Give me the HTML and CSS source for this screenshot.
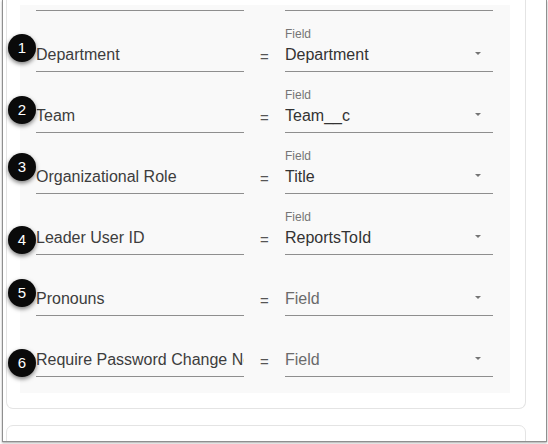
FILE: index.html
```html
<!DOCTYPE html>
<html>
<head>
<meta charset="utf-8">
<link rel="stylesheet" href="styles.css">
</head>
<body>
<div class="window">
  <div class="card card-main">
    <div class="panel">
      <div class="row row-partial">
        <div class="input"></div>
        <div class="eq"></div>
        <div class="select"></div>
      </div>

      <div class="row">
        <span class="badge b1">1</span>
        <div class="input"><span class="val">Department</span></div>
        <div class="eq">=</div>
        <div class="select"><span class="lbl">Field</span><span class="val">Department</span><span class="caret"></span></div>
      </div>

      <div class="row">
        <span class="badge b2">2</span>
        <div class="input"><span class="val">Team</span></div>
        <div class="eq">=</div>
        <div class="select"><span class="lbl">Field</span><span class="val">Team__c</span><span class="caret"></span></div>
      </div>

      <div class="row">
        <span class="badge b3">3</span>
        <div class="input"><span class="val">Organizational Role</span></div>
        <div class="eq">=</div>
        <div class="select"><span class="lbl">Field</span><span class="val">Title</span><span class="caret"></span></div>
      </div>

      <div class="row">
        <span class="badge b4">4</span>
        <div class="input"><span class="val">Leader User ID</span></div>
        <div class="eq">=</div>
        <div class="select"><span class="lbl">Field</span><span class="val">ReportsToId</span><span class="caret"></span></div>
      </div>

      <div class="row">
        <span class="badge b5">5</span>
        <div class="input"><span class="val">Pronouns</span></div>
        <div class="eq">=</div>
        <div class="select"><span class="val placeholder">Field</span><span class="caret"></span></div>
      </div>

      <div class="row">
        <span class="badge b6">6</span>
        <div class="input"><span class="val">Require Password Change Next Login</span></div>
        <div class="eq">=</div>
        <div class="select"><span class="val placeholder">Field</span><span class="caret"></span></div>
      </div>
    </div>
  </div>
  <div class="card card-next"></div>
</div>
</body>
</html>
```

FILE: styles.css
```css
* { box-sizing: border-box; }
html, body { margin: 0; padding: 0; background: #ffffff; }
body {
  width: 548px;
  height: 444px;
  overflow: hidden;
  font-family: "Liberation Sans", Arial, "Helvetica Neue", sans-serif;
}
.window {
  margin-left: 2px;
  width: 545px;
  height: 442px;
  border: 1px solid #8f8f8f;
  border-top: none;
  box-shadow: 0 1px 2px rgba(0,0,0,0.35);
  background: #ffffff;
  overflow: hidden;
  padding-left: 3px;
}
.card {
  width: 520px;
  border: 1px solid #e4e4e4;
  background: #ffffff;
}
.card-main {
  border-top: none;
  border-radius: 0 0 7px 7px;
  padding: 5px 15px 15px 13px;
}
.card-next {
  margin-top: 16px;
  height: 40px;
  border-radius: 7px 7px 0 0;
}
.panel {
  background: #f9f9f9;
  width: 490px;
  padding: 5px 0 16px 16px;
}
.row {
  position: relative;
  display: grid;
  grid-template-columns: 208px 41px 208px;
  height: 61px;
}
.row-partial { height: 1px; }
.input, .select {
  position: relative;
  border-bottom: 1px solid #8e8e8e;
  display: flex;
  flex-direction: column;
  justify-content: flex-end;
  padding-bottom: 6px;
  overflow: hidden;
  white-space: nowrap;
}
.row-partial .input, .row-partial .select { padding: 0; height: 1px; }
.val {
  display: block;
  overflow: hidden;
  white-space: nowrap;
  font-size: 16px;
  line-height: 20px;
  color: #333333;
}
.input .val { color: #3d3d3d; }
.placeholder { color: #6b6b6b; }
.lbl {
  font-size: 12px;
  line-height: 14px;
  color: #757575;
  margin-bottom: 4px;
}
.eq {
  font-size: 15px;
  color: #555555;
  text-align: center;
  align-self: end;
  padding-bottom: 5px;
  line-height: 20px;
}
.caret {
  position: absolute;
  right: 12px;
  bottom: 16px;
  width: 0;
  height: 0;
  border-left: 3px solid transparent;
  border-right: 3px solid transparent;
  border-top: 3px solid #757575;
}
.badge {
  position: absolute;
  left: -28px;
  width: 28px;
  height: 28px;
  border-radius: 50%;
  background: #0a0a0a;
  color: #ffffff;
  font-size: 15px;
  line-height: 28px;
  text-align: center;
  box-shadow: 0 2px 4px rgba(0,0,0,0.5), 0 0 0 1px rgba(255,255,255,0.7);
  z-index: 2;
}
.b1 { top: 23px; }
.b2 { top: 24px; }
.b3 { top: 20px; }
.b4 { top: 32px; }
.b5 { top: 24px; }
.b6 { top: 33px; }
```
